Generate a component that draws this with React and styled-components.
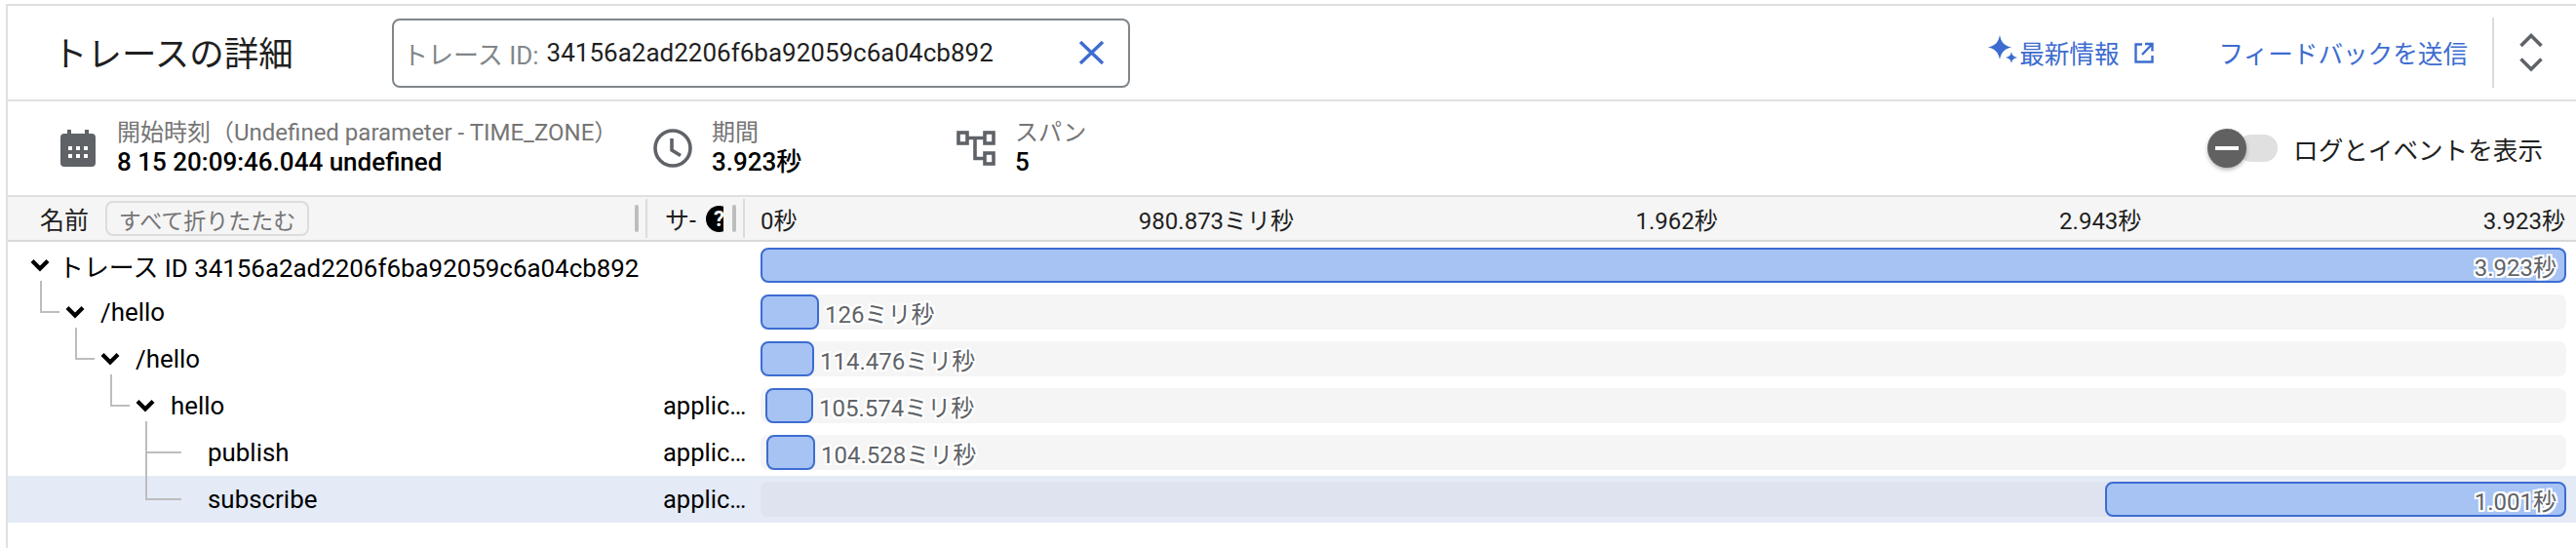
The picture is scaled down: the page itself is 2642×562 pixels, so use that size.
import React from "react";
import styled, { createGlobalStyle } from "styled-components";

const GlobalStyle = createGlobalStyle`
  html, body { margin: 0; padding: 0; background: #fff; }
  body { font-family: Roboto, "Noto Sans CJK JP", sans-serif; color: #000; }
  * { box-sizing: border-box; }
`;

const Frame = styled.div`
  margin: 4px 0 0 6px;
  width: 2636px;
  height: 558px;
  border-top: 2px solid #e0e0e0;
  border-left: 2px solid #e0e0e0;
`;

const Header = styled.header`
  display: flex;
  align-items: center;
  height: 98px;
  padding: 0 34px 0 46px;
  border-bottom: 2px solid #e0e0e0;
`;

const Title = styled.h1`
  width: 348px;
  margin: 0;
  padding-bottom: 4px;
  font-size: 35.5px;
  font-weight: 400;
  color: #1f1f1f;
  white-space: nowrap;
`;

const SearchBox = styled.div`
  display: flex;
  align-items: center;
  width: 757px;
  height: 71px;
  padding: 0 24px 0 9px;
  border: 2px solid #80868b;
  border-radius: 8px;
  font-size: 26px;
  white-space: nowrap;
`;

const SearchLabel = styled.span`
  color: #80868b;
  margin-right: 8px;
`;

const SearchValue = styled.span`
  flex: 1;
  color: #1f1f1f;
`;

const HeaderLinks = styled.div`
  display: flex;
  align-items: center;
  margin-left: auto;
`;

const LinkText = styled.a`
  display: flex;
  align-items: center;
  padding-bottom: 2px;
  color: #3d6cd0;
  font-size: 25.6px;
  white-space: nowrap;
`;

const Divider = styled.div`
  width: 2px;
  height: 72px;
  margin: 0 26px 0 25px;
  background: #dadce0;
`;

const ExpandIcon = styled.div`
  display: flex;
  width: 24px;
`;

const Summary = styled.section`
  display: flex;
  align-items: center;
  height: 98px;
  padding: 0 34px 0 54px;
  border-bottom: 2px solid #e0e0e0;
`;

const Stat = styled.div`
  display: flex;
  align-items: center;
  flex: none;
  width: ${(p) => p.$width};
`;

const StatIcon = styled.div`
  display: flex;
  flex: none;
  margin-right: ${(p) => p.$gap}px;
`;

const StatText = styled.div`
  display: flex;
  flex-direction: column;
  white-space: nowrap;
`;

const StatLabel = styled.span`
  font-size: 24px;
  line-height: 29px;
  color: #757575;
`;

const StatValue = styled.span`
  font-size: 26px;
  line-height: 31px;
  font-weight: 500;
  color: #000;
`;

const ToggleWrap = styled.div`
  display: flex;
  align-items: center;
  margin-left: auto;
`;

const ToggleTrack = styled.div`
  position: relative;
  width: 41px;
  height: 28px;
  margin-right: 16px;
  border-radius: 14px;
  background: #e0e0e0;
`;

const ToggleThumb = styled.div`
  position: absolute;
  left: -31px;
  top: -6px;
  width: 40px;
  height: 40px;
  display: flex;
  align-items: center;
  justify-content: center;
  border-radius: 50%;
  background: #616161;
  box-shadow: 0 2px 4px rgba(0, 0, 0, 0.3);

  &::after {
    content: "";
    width: 24px;
    height: 4px;
    background: #fff;
  }
`;

const ToggleLabel = styled.span`
  font-size: 25.6px;
  color: #1f1f1f;
  white-space: nowrap;
`;

const TableHead = styled.div`
  display: grid;
  grid-template-columns: 656px 100px 1fr;
  height: 46px;
  background: #f5f5f5;
  border-bottom: 2px solid #d9d9d9;
`;

const HeadCell = styled.div`
  position: relative;
  display: flex;
  align-items: center;
  padding: ${(p) => p.$padding};
  font-size: 25px;
  color: #1f1f1f;
  white-space: nowrap;

  &::after {
    content: "";
    display: ${(p) => (p.$divider ? "block" : "none")};
    position: absolute;
    right: 0;
    top: 2px;
    bottom: 2px;
    width: 2px;
    background: #dcdcdc;
  }
`;

const CollapseButton = styled.button`
  height: 36px;
  width: 209px;
  margin-left: 17px;
  padding: 0;
  border: 2px solid #dcdcdc;
  border-radius: 8px;
  background: #f5f5f5;
  font-family: inherit;
  font-size: 23px;
  color: #757575;
`;

const Handle = styled.div`
  position: absolute;
  top: 8px;
  right: ${(p) => p.$right}px;
  width: 4px;
  height: 28px;
  border-radius: 2px;
  background: #bdbdbd;
`;

const HelpClip = styled.div`
  width: 18px;
  height: 27px;
  margin-left: 10px;
  overflow: hidden;
`;

const HelpDot = styled.div`
  display: flex;
  align-items: center;
  justify-content: center;
  width: 27px;
  height: 27px;
  border-radius: 50%;
  background: #000;
  color: #fff;
  font-size: 22px;
  font-weight: 700;
`;

const Ticks = styled.div`
  display: flex;
  justify-content: space-between;
  align-items: center;
  padding: 0 11px 0 16px;
  font-size: 24px;
  color: #1f1f1f;
  white-space: nowrap;
`;

const Row = styled.div`
  display: grid;
  grid-template-columns: 656px 100px 1fr;
  height: 48px;
  background: ${(p) => (p.$selected ? "#e4eaf6" : "#fff")};
`;

const NameCell = styled.div`
  position: relative;
  display: flex;
  align-items: center;
  padding-left: ${(p) => p.$indent}px;
  font-size: 25.9px;
  color: #000;
  white-space: nowrap;
`;

const Chevron = styled.svg`
  flex: none;
  width: 20px;
  height: 14px;
  margin-right: ${(p) => p.$gap}px;
`;

const Connector = styled.div`
  position: absolute;
  left: ${(p) => p.$left}px;
  top: ${(p) => p.$top}px;
  width: ${(p) => p.$width}px;
  height: ${(p) => p.$height}px;
  border-left: 2px solid #bdbdbd;
  border-bottom: 2px solid #bdbdbd;
`;

const ServiceCell = styled.div`
  display: flex;
  align-items: center;
  padding-left: 16px;
  font-size: 25.5px;
  color: #000;
  white-space: nowrap;
`;

const TimelineCell = styled.div`
  display: flex;
  align-items: center;
  padding: 0 10px 0 16px;
`;

const Track = styled.div`
  display: flex;
  align-items: center;
  width: 100%;
  height: 36px;
  border-radius: 8px;
  background: ${(p) => (p.$selected ? "#dfe3ef" : "#f5f5f5")};
`;

const Bar = styled.div`
  display: flex;
  align-items: center;
  justify-content: flex-end;
  flex: none;
  height: 36px;
  padding-right: 8px;
  border: 2px solid #3d6cd0;
  border-radius: 8px;
  background: #a6c3f4;
`;

const Duration = styled.span`
  margin-left: ${(p) => (p.$inside ? 0 : 6)}px;
  font-size: 24px;
  color: #5f6368;
  white-space: nowrap;
  text-shadow: 2px 0 0 #fff, -2px 0 0 #fff, 0 2px 0 #fff, 0 -2px 0 #fff, 2px 2px 0 #fff, -2px -2px 0 #fff, 2px -2px 0 #fff, -2px 2px 0 #fff;
`;

const ChevronIcon = ({ gap }) => (
  <Chevron $gap={gap} viewBox="0 0 20 14">
    <path d="M2 2.500l8 8 8-8" fill="none" stroke="#000" strokeWidth="4.200" />
  </Chevron>
);

const CalendarIcon = () => (
  <svg width="36" height="38" viewBox="0 0 36 38">
    <path fill="#5f6368" d="M7 0h4v4h14V0h4v4h3a4 4 0 0 1 4 4v26a4 4 0 0 1-4 4H4a4 4 0 0 1-4-4V8a4 4 0 0 1 4-4h3z" />
    <g fill="#fff">
      <rect x="8" y="17" width="4" height="4" />
      <rect x="16" y="17" width="4" height="4" />
      <rect x="24" y="17" width="4" height="4" />
      <rect x="8" y="25" width="4" height="4" />
      <rect x="16" y="25" width="4" height="4" />
      <rect x="24" y="25" width="4" height="4" />
    </g>
  </svg>
);

const ClockIcon = () => (
  <svg width="40" height="40" viewBox="0 0 40 40" fill="none" stroke="#5f6368" strokeWidth="3.6">
    <circle cx="20" cy="20" r="18" />
    <path d="M19 10v12l9 5.500" />
  </svg>
);

const TreeIcon = () => (
  <svg width="40" height="36" viewBox="0 0 40 36" fill="none" stroke="#5f6368" strokeWidth="3.6">
    <rect x="2" y="2" width="9" height="11" />
    <rect x="29" y="2" width="9" height="11" />
    <rect x="29" y="23" width="9" height="11" />
    <path d="M11 7.500h18M19 7.500V28.500H29" />
  </svg>
);

const SparkIcon = () => (
  <svg width="30" height="36" viewBox="0 0 30 36" fill="#3d6cd0" style={{ marginRight: 2 }}>
    <path d="M12 1c1.500 7 4 10.500 12 12.500-8 2-10.500 5.500-12 12.500C10.500 19 8 15.500 0 13.500 8 11.500 10.500 8 12 1z" />
    <path d="M24 18c.7 3.500 2 5 6 6-4 1-5.300 2.500-6 6-.7-3.500-2-5-6-6 4-1 5.300-2.500 6-6z" />
  </svg>
);

const ExternalIcon = () => (
  <svg width="20" height="22" viewBox="0 0 20 22" fill="none" stroke="#3d6cd0" strokeWidth="2.4" style={{ marginLeft: 15, marginRight: 67 }}>
    <path d="M8 2.500H1.500v18h17V14M11 2h7.500v7.500M18 2.500 8 13" />
  </svg>
);

const CloseIcon = () => (
  <svg width="27" height="24" viewBox="0 0 27 24" fill="none" stroke="#3d6cd0" strokeWidth="3.4">
    <path d="M2 1l23 22M25 1 2 23" />
  </svg>
);

const UpDownIcon = () => (
  <svg width="24" height="40" viewBox="0 0 24 40" fill="none" stroke="#5f6368" strokeWidth="3.6">
    <path d="M1.500 13 12 2.500 22.500 13M1.500 26.500 12 37 22.500 26.500" />
  </svg>
);

const rows = [
  { name: "トレース ID 34156a2ad2206f6ba92059c6a04cb892", indent: 23, gap: 9, chevron: true, left: 0, width: 1852, duration: "3.923秒", inside: true },
  { name: "/hello", indent: 59, gap: 16, chevron: true, left: 0, width: 60, duration: "126ミリ秒", connector: { left: 33, top: -8, width: 20, height: 33 } },
  { name: "/hello", indent: 95, gap: 16, chevron: true, left: 0, width: 55, duration: "114.476ミリ秒", connector: { left: 69, top: -8, width: 20, height: 33 } },
  { name: "hello", service: "applic…", indent: 131, gap: 16, chevron: true, left: 5, width: 49, duration: "105.574ミリ秒", connector: { left: 105, top: -8, width: 20, height: 33 } },
  { name: "publish", service: "applic…", indent: 205, left: 6, width: 50, duration: "104.528ミリ秒", connector: { left: 141, top: -8, width: 37, height: 33 } },
  { name: "subscribe", service: "applic…", indent: 205, left: 1379, width: 473, duration: "1.001秒", inside: true, selected: true, connector: { left: 141, top: -24, width: 37, height: 49 } },
];

export default function App() {
  return (
    <>
      <GlobalStyle />
      <Frame>
        <Header>
          <Title>トレースの詳細</Title>
          <SearchBox>
            <SearchLabel>トレース ID:</SearchLabel>
            <SearchValue>34156a2ad2206f6ba92059c6a04cb892</SearchValue>
            <CloseIcon />
          </SearchBox>
          <HeaderLinks>
            <LinkText><SparkIcon />最新情報</LinkText>
            <ExternalIcon />
            <LinkText>フィードバックを送信</LinkText>
            <Divider />
            <ExpandIcon><UpDownIcon /></ExpandIcon>
          </HeaderLinks>
        </Header>
        <Summary>
          <Stat $width="608px">
            <StatIcon $gap={22}><CalendarIcon /></StatIcon>
            <StatText>
              <StatLabel>開始時刻（Undefined parameter - TIME_ZONE）</StatLabel>
              <StatValue>8 15 20:09:46.044 undefined</StatValue>
            </StatText>
          </Stat>
          <Stat $width="311px">
            <StatIcon $gap={20}><ClockIcon /></StatIcon>
            <StatText>
              <StatLabel>期間</StatLabel>
              <StatValue>3.923秒</StatValue>
            </StatText>
          </Stat>
          <Stat>
            <StatIcon $gap={20}><TreeIcon /></StatIcon>
            <StatText>
              <StatLabel>スパン</StatLabel>
              <StatValue>5</StatValue>
            </StatText>
          </Stat>
          <ToggleWrap>
            <ToggleTrack><ToggleThumb /></ToggleTrack>
            <ToggleLabel>ログとイベントを表示</ToggleLabel>
          </ToggleWrap>
        </Summary>
        <TableHead>
          <HeadCell $padding="0 0 0 33px" $divider>
            名前
            <CollapseButton>すべて折りたたむ</CollapseButton>
            <Handle $right={9} />
          </HeadCell>
          <HeadCell $padding="0 0 0 18px" $divider>
            サ-
            <HelpClip><HelpDot>?</HelpDot></HelpClip>
            <Handle $right={9} />
          </HeadCell>
          <Ticks>
            <span>0秒</span>
            <span>980.873ミリ秒</span>
            <span>1.962秒</span>
            <span>2.943秒</span>
            <span>3.923秒</span>
          </Ticks>
        </TableHead>
        {rows.map((r, i) => (
          <Row key={i} $selected={r.selected}>
            <NameCell $indent={r.indent}>
              {r.connector && (
                <Connector
                  $left={r.connector.left}
                  $top={r.connector.top}
                  $width={r.connector.width}
                  $height={r.connector.height}
                />
              )}
              {r.chevron && <ChevronIcon gap={r.gap} />}
              {r.name}
            </NameCell>
            <ServiceCell>{r.service}</ServiceCell>
            <TimelineCell>
              <Track $selected={r.selected}>
                <Bar style={{ marginLeft: r.left, width: r.width }}>
                  {r.inside && <Duration $inside>{r.duration}</Duration>}
                </Bar>
                {!r.inside && <Duration>{r.duration}</Duration>}
              </Track>
            </TimelineCell>
          </Row>
        ))}
      </Frame>
    </>
  );
}
